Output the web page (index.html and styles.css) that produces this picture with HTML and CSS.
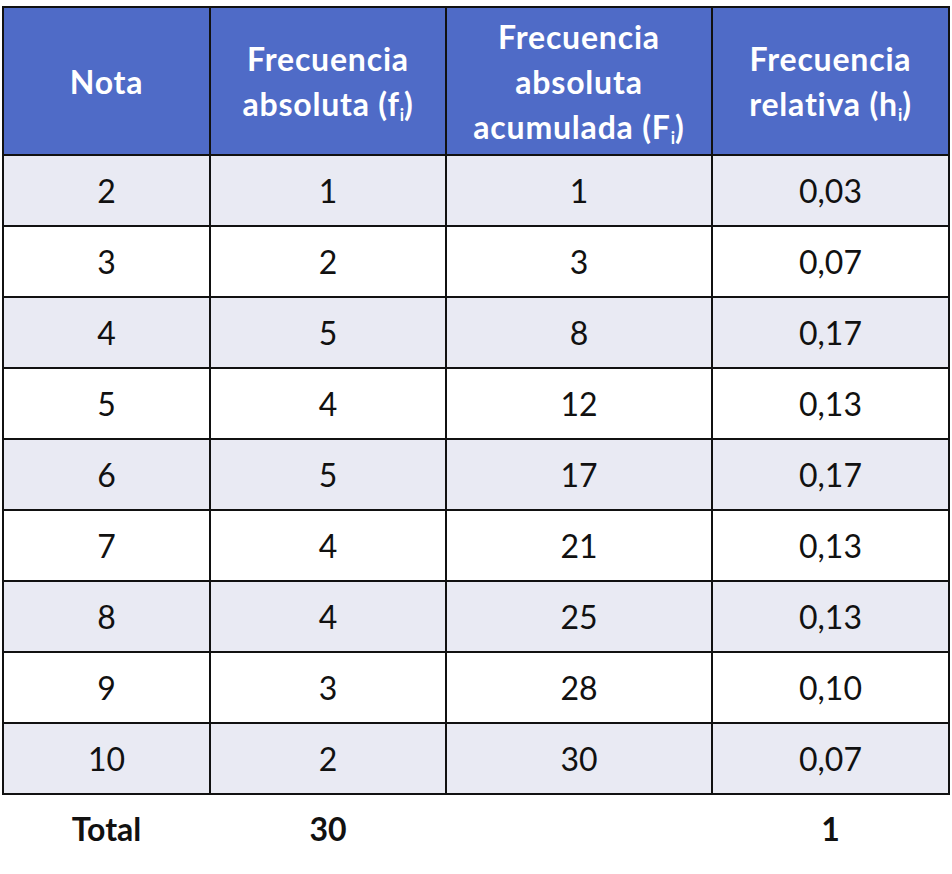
FILE: index.html
```html
<!DOCTYPE html>
<html lang="es">
<head>
<meta charset="utf-8">
<title>Tabla de frecuencias</title>
<link rel="stylesheet" href="styles.css">
</head>
<body>
<table class="freq">
  <colgroup>
    <col class="c1"><col class="c2"><col class="c3"><col class="c4">
  </colgroup>
  <thead>
    <tr>
      <th>Nota</th>
      <th>Frecuencia<br>absoluta (f<sub>i</sub>)</th>
      <th>Frecuencia<br>absoluta<br>acumulada (F<sub>i</sub>)</th>
      <th>Frecuencia<br>relativa (h<sub>i</sub>)</th>
    </tr>
  </thead>
  <tbody>
    <tr class="alt"><td>2</td><td>1</td><td>1</td><td>0,03</td></tr>
    <tr><td>3</td><td>2</td><td>3</td><td>0,07</td></tr>
    <tr class="alt"><td>4</td><td>5</td><td>8</td><td>0,17</td></tr>
    <tr><td>5</td><td>4</td><td>12</td><td>0,13</td></tr>
    <tr class="alt"><td>6</td><td>5</td><td>17</td><td>0,17</td></tr>
    <tr><td>7</td><td>4</td><td>21</td><td>0,13</td></tr>
    <tr class="alt"><td>8</td><td>4</td><td>25</td><td>0,13</td></tr>
    <tr><td>9</td><td>3</td><td>28</td><td>0,10</td></tr>
    <tr class="alt"><td>10</td><td>2</td><td>30</td><td>0,07</td></tr>
  </tbody>
  <tfoot>
    <tr><td>Total</td><td>30</td><td></td><td>1</td></tr>
  </tfoot>
</table>
</body>
</html>
```
FILE: styles.css
```css
html, body {
  margin: 0;
  padding: 0;
  background: #ffffff;
}
body {
  padding: 6px 0 0 2px;
  font-family: Lato, "Open Sans", sans-serif;
}
.freq {
  border-collapse: collapse;
  table-layout: fixed;
  width: 946px;
}
.c1 { width: 207px; }
.c2 { width: 236px; }
.c3 { width: 266px; }
.c4 { width: 237px; }
.freq th,
.freq td {
  text-align: center;
  vertical-align: middle;
  padding: 0;
}
.freq thead th {
  background: #4f6bc7;
  color: #ffffff;
  font-weight: 700;
  font-size: 32px;
  letter-spacing: 0.8px;
  line-height: 45px;
  height: 146px;
  border: 2px solid #111111;
}
.freq sub {
  font-size: 17px;
  vertical-align: -5px;
  line-height: 0;
  letter-spacing: 0;
}
.freq tbody td {
  height: 69px;
  font-size: 32px;
  color: #111111;
  border: 2px solid #111111;
  background: #ffffff;
}
.freq tbody tr.alt td {
  background: #e9eaf3;
}
.freq tfoot td {
  height: 66px;
  font-size: 32px;
  font-weight: 700;
  color: #111111;
  border: none;
}
```
